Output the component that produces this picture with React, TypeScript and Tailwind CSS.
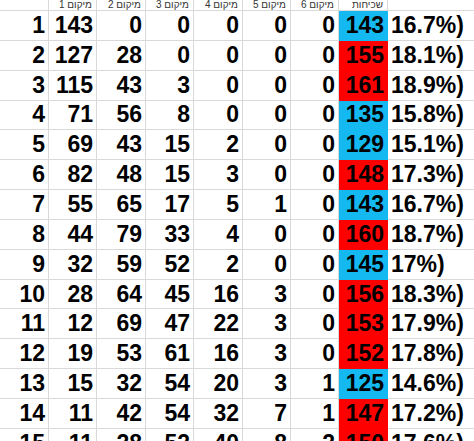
import React from 'react';

type Row = {
  idx: number;
  places: number[];
  total: number;
  pct: string;
  hot: boolean;
};

const rows: Row[] = [
  { idx: 1, places: [143, 0, 0, 0, 0, 0], total: 143, pct: '16.7%)', hot: false },
  { idx: 2, places: [127, 28, 0, 0, 0, 0], total: 155, pct: '18.1%)', hot: true },
  { idx: 3, places: [115, 43, 3, 0, 0, 0], total: 161, pct: '18.9%)', hot: true },
  { idx: 4, places: [71, 56, 8, 0, 0, 0], total: 135, pct: '15.8%)', hot: false },
  { idx: 5, places: [69, 43, 15, 2, 0, 0], total: 129, pct: '15.1%)', hot: false },
  { idx: 6, places: [82, 48, 15, 3, 0, 0], total: 148, pct: '17.3%)', hot: true },
  { idx: 7, places: [55, 65, 17, 5, 1, 0], total: 143, pct: '16.7%)', hot: false },
  { idx: 8, places: [44, 79, 33, 4, 0, 0], total: 160, pct: '18.7%)', hot: true },
  { idx: 9, places: [32, 59, 52, 2, 0, 0], total: 145, pct: '17%)', hot: false },
  { idx: 10, places: [28, 64, 45, 16, 3, 0], total: 156, pct: '18.3%)', hot: true },
  { idx: 11, places: [12, 69, 47, 22, 3, 0], total: 153, pct: '17.9%)', hot: true },
  { idx: 12, places: [19, 53, 61, 16, 3, 0], total: 152, pct: '17.8%)', hot: true },
  { idx: 13, places: [15, 32, 54, 20, 3, 1], total: 125, pct: '14.6%)', hot: false },
  { idx: 14, places: [11, 42, 54, 32, 7, 1], total: 147, pct: '17.2%)', hot: true },
  { idx: 15, places: [11, 28, 52, 40, 8, 2], total: 150, pct: '17.6%)', hot: true },
];

const headers = ['', 'מיקום 1', 'מיקום 2', 'מיקום 3', 'מיקום 4', 'מיקום 5', 'מיקום 6', 'שכיחות', ''];

const gridCols = 'grid grid-cols-[49px_48px_49px_48px_49px_48px_48px_49px_1fr]';

const NumCell: React.FC<{ value: React.ReactNode }> = ({ value }) => (
  <div className="h-[29.85px] border-r border-b border-[#d9d9d9] flex items-center justify-end pr-[3px]">
    {value}
  </div>
);

export default function App() {
  return (
    <div
      className="w-[474px] h-[441px] overflow-hidden bg-white text-black"
      style={{ fontFamily: '"Liberation Sans", Arial, "DejaVu Sans", sans-serif' }}
    >
      {/* Header row */}
      <div className={gridCols}>
        {headers.map((h, i) => (
          <div
            key={i}
            className={`h-[11px] border-b border-[#d9d9d9] overflow-hidden flex items-end justify-end pr-[4px] text-[10px] leading-[11px] text-[#333] ${
              i < 8 ? 'border-r' : ''
            }`}
          >
            {h}
          </div>
        ))}
      </div>

      {/* Body rows */}
      {rows.map((r) => (
        <div key={r.idx} className={`${gridCols} text-[23px] font-bold leading-none`}>
          <NumCell value={r.idx} />
          {r.places.map((p, i) => (
            <NumCell key={i} value={p} />
          ))}
          <div
            className={`h-[29.85px] border-r border-b flex items-center justify-end pr-[3px] ${
              r.hot ? 'bg-[#ff0000] border-[#ff0000]' : 'bg-[#13b9f0] border-[#13b9f0]'
            }`}
          >
            {r.total}
          </div>
          <div className="h-[29.85px] border-b border-[#d9d9d9] flex items-center pl-[3px] whitespace-nowrap">
            {r.pct}
          </div>
        </div>
      ))}
    </div>
  );
}
